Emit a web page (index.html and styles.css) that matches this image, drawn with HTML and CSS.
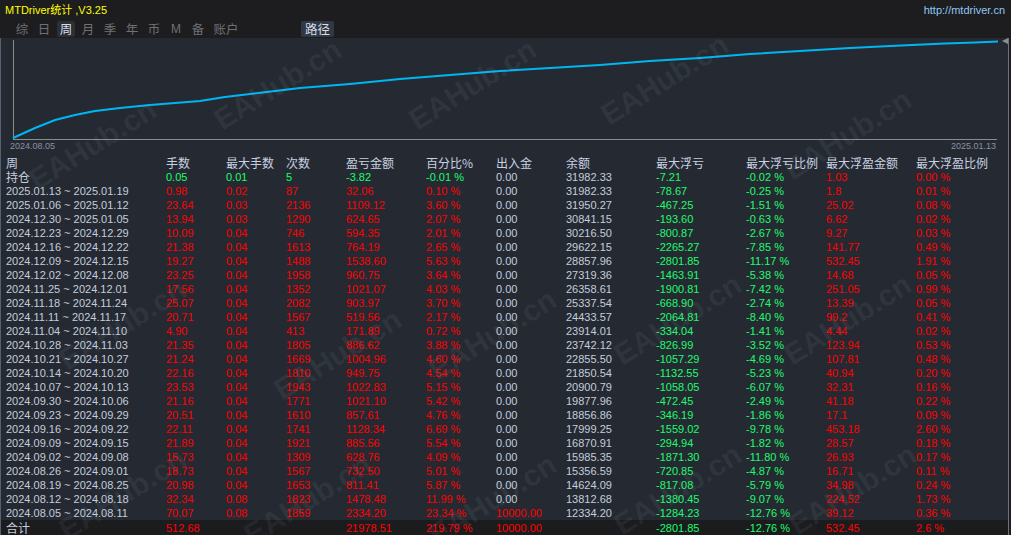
FILE: index.html
```html
<!DOCTYPE html>
<html lang="zh">
<head>
<meta charset="utf-8">
<title>MTDriver统计</title>
<link rel="stylesheet" href="styles.css">
</head>
<body>
<div class="app">
  <header class="titlebar">
    <span class="title">MTDriver统计 ,V3.25</span>
    <span class="url">http://mtdriver.cn</span>
  </header>
  <nav class="tabs">
    <span class="tab">综</span>
    <span class="tab">日</span>
    <span class="tab active">周</span>
    <span class="tab">月</span>
    <span class="tab">季</span>
    <span class="tab">年</span>
    <span class="tab">币</span>
    <span class="tab latin">M</span>
    <span class="tab">备</span>
    <span class="tab wide">账户</span>
    <span class="tab path">路径</span>
  </nav>
  <main class="panel">
    <div class="chart">
      <svg class="chart-svg" width="1008" height="118" viewBox="0 0 1008 118">
        <line x1="13.5" y1="2" x2="13.5" y2="101.5" class="axis"/>
        <line x1="13" y1="101.5" x2="997" y2="101.5" class="axis"/>
        <polyline class="curve" points="13,100 24,95 35,90 45,86 55,82 75,77 95,73 120,70 150,67 175,65 200,63 225,59 250,56 275,53 300,50 350,46 400,41 450,37 500,33 550,30 600,27 650,23 700,20 750,16 800,13 850,10 880,8.5 912,7 945,5.5 975,4.5 998,3.5"/>
        <polygon class="handle" points="1002,3 1008,0 1008,6"/>
        <text x="10" y="111" class="axis-label">2024.08.05</text>
        <text x="996" y="111" class="axis-label end">2025.01.13</text>
      </svg>
    </div>
    <div class="table">
      <div class="row head"><span>周</span><span>手数</span><span>最大手数</span><span>次数</span><span>盈亏金额</span><span>百分比%</span><span>出入金</span><span>余额</span><span>最大浮亏</span><span>最大浮亏比例</span><span>最大浮盈金额</span><span>最大浮盈比例</span></div>
      <div class="row"><span class="cjk">持仓</span><span class="g">0.05</span><span class="g">0.01</span><span class="g">5</span><span class="g">-3.82</span><span class="g">-0.01 %</span><span>0.00</span><span>31982.33</span><span class="g">-7.21</span><span class="g">-0.02 %</span><span class="r">1.03</span><span class="r">0.00 %</span></div>
      <div class="row"><span>2025.01.13 ~ 2025.01.19</span><span class="r">0.98</span><span class="r">0.02</span><span class="r">87</span><span class="r">32.06</span><span class="r">0.10 %</span><span>0.00</span><span>31982.33</span><span class="g">-78.67</span><span class="g">-0.25 %</span><span class="r">1.8</span><span class="r">0.01 %</span></div>
      <div class="row"><span>2025.01.06 ~ 2025.01.12</span><span class="r">23.64</span><span class="r">0.03</span><span class="r">2136</span><span class="r">1109.12</span><span class="r">3.60 %</span><span>0.00</span><span>31950.27</span><span class="g">-467.25</span><span class="g">-1.51 %</span><span class="r">25.02</span><span class="r">0.08 %</span></div>
      <div class="row"><span>2024.12.30 ~ 2025.01.05</span><span class="r">13.94</span><span class="r">0.03</span><span class="r">1290</span><span class="r">624.65</span><span class="r">2.07 %</span><span>0.00</span><span>30841.15</span><span class="g">-193.60</span><span class="g">-0.63 %</span><span class="r">6.62</span><span class="r">0.02 %</span></div>
      <div class="row"><span>2024.12.23 ~ 2024.12.29</span><span class="r">10.09</span><span class="r">0.04</span><span class="r">746</span><span class="r">594.35</span><span class="r">2.01 %</span><span>0.00</span><span>30216.50</span><span class="g">-800.87</span><span class="g">-2.67 %</span><span class="r">9.27</span><span class="r">0.03 %</span></div>
      <div class="row"><span>2024.12.16 ~ 2024.12.22</span><span class="r">21.38</span><span class="r">0.04</span><span class="r">1613</span><span class="r">764.19</span><span class="r">2.65 %</span><span>0.00</span><span>29622.15</span><span class="g">-2265.27</span><span class="g">-7.85 %</span><span class="r">141.77</span><span class="r">0.49 %</span></div>
      <div class="row"><span>2024.12.09 ~ 2024.12.15</span><span class="r">19.27</span><span class="r">0.04</span><span class="r">1488</span><span class="r">1538.60</span><span class="r">5.63 %</span><span>0.00</span><span>28857.96</span><span class="g">-2801.85</span><span class="g">-11.17 %</span><span class="r">532.45</span><span class="r">1.91 %</span></div>
      <div class="row"><span>2024.12.02 ~ 2024.12.08</span><span class="r">23.25</span><span class="r">0.04</span><span class="r">1958</span><span class="r">960.75</span><span class="r">3.64 %</span><span>0.00</span><span>27319.36</span><span class="g">-1463.91</span><span class="g">-5.38 %</span><span class="r">14.68</span><span class="r">0.05 %</span></div>
      <div class="row"><span>2024.11.25 ~ 2024.12.01</span><span class="r">17.56</span><span class="r">0.04</span><span class="r">1352</span><span class="r">1021.07</span><span class="r">4.03 %</span><span>0.00</span><span>26358.61</span><span class="g">-1900.81</span><span class="g">-7.42 %</span><span class="r">251.05</span><span class="r">0.99 %</span></div>
      <div class="row"><span>2024.11.18 ~ 2024.11.24</span><span class="r">25.07</span><span class="r">0.04</span><span class="r">2082</span><span class="r">903.97</span><span class="r">3.70 %</span><span>0.00</span><span>25337.54</span><span class="g">-668.90</span><span class="g">-2.74 %</span><span class="r">13.39</span><span class="r">0.05 %</span></div>
      <div class="row"><span>2024.11.11 ~ 2024.11.17</span><span class="r">20.71</span><span class="r">0.04</span><span class="r">1567</span><span class="r">519.56</span><span class="r">2.17 %</span><span>0.00</span><span>24433.57</span><span class="g">-2064.81</span><span class="g">-8.40 %</span><span class="r">99.2</span><span class="r">0.41 %</span></div>
      <div class="row"><span>2024.11.04 ~ 2024.11.10</span><span class="r">4.90</span><span class="r">0.04</span><span class="r">413</span><span class="r">171.89</span><span class="r">0.72 %</span><span>0.00</span><span>23914.01</span><span class="g">-334.04</span><span class="g">-1.41 %</span><span class="r">4.44</span><span class="r">0.02 %</span></div>
      <div class="row"><span>2024.10.28 ~ 2024.11.03</span><span class="r">21.35</span><span class="r">0.04</span><span class="r">1805</span><span class="r">886.62</span><span class="r">3.88 %</span><span>0.00</span><span>23742.12</span><span class="g">-826.99</span><span class="g">-3.52 %</span><span class="r">123.94</span><span class="r">0.53 %</span></div>
      <div class="row"><span>2024.10.21 ~ 2024.10.27</span><span class="r">21.24</span><span class="r">0.04</span><span class="r">1669</span><span class="r">1004.96</span><span class="r">4.60 %</span><span>0.00</span><span>22855.50</span><span class="g">-1057.29</span><span class="g">-4.69 %</span><span class="r">107.81</span><span class="r">0.48 %</span></div>
      <div class="row"><span>2024.10.14 ~ 2024.10.20</span><span class="r">22.16</span><span class="r">0.04</span><span class="r">1810</span><span class="r">949.75</span><span class="r">4.54 %</span><span>0.00</span><span>21850.54</span><span class="g">-1132.55</span><span class="g">-5.23 %</span><span class="r">40.94</span><span class="r">0.20 %</span></div>
      <div class="row"><span>2024.10.07 ~ 2024.10.13</span><span class="r">23.53</span><span class="r">0.04</span><span class="r">1943</span><span class="r">1022.83</span><span class="r">5.15 %</span><span>0.00</span><span>20900.79</span><span class="g">-1058.05</span><span class="g">-6.07 %</span><span class="r">32.31</span><span class="r">0.16 %</span></div>
      <div class="row"><span>2024.09.30 ~ 2024.10.06</span><span class="r">21.16</span><span class="r">0.04</span><span class="r">1771</span><span class="r">1021.10</span><span class="r">5.42 %</span><span>0.00</span><span>19877.96</span><span class="g">-472.45</span><span class="g">-2.49 %</span><span class="r">41.18</span><span class="r">0.22 %</span></div>
      <div class="row"><span>2024.09.23 ~ 2024.09.29</span><span class="r">20.51</span><span class="r">0.04</span><span class="r">1610</span><span class="r">857.61</span><span class="r">4.76 %</span><span>0.00</span><span>18856.86</span><span class="g">-346.19</span><span class="g">-1.86 %</span><span class="r">17.1</span><span class="r">0.09 %</span></div>
      <div class="row"><span>2024.09.16 ~ 2024.09.22</span><span class="r">22.11</span><span class="r">0.04</span><span class="r">1741</span><span class="r">1128.34</span><span class="r">6.69 %</span><span>0.00</span><span>17999.25</span><span class="g">-1559.02</span><span class="g">-9.78 %</span><span class="r">453.18</span><span class="r">2.60 %</span></div>
      <div class="row"><span>2024.09.09 ~ 2024.09.15</span><span class="r">21.89</span><span class="r">0.04</span><span class="r">1921</span><span class="r">885.56</span><span class="r">5.54 %</span><span>0.00</span><span>16870.91</span><span class="g">-294.94</span><span class="g">-1.82 %</span><span class="r">28.57</span><span class="r">0.18 %</span></div>
      <div class="row"><span>2024.09.02 ~ 2024.09.08</span><span class="r">15.73</span><span class="r">0.04</span><span class="r">1309</span><span class="r">628.76</span><span class="r">4.09 %</span><span>0.00</span><span>15985.35</span><span class="g">-1871.30</span><span class="g">-11.80 %</span><span class="r">26.93</span><span class="r">0.17 %</span></div>
      <div class="row"><span>2024.08.26 ~ 2024.09.01</span><span class="r">18.73</span><span class="r">0.04</span><span class="r">1567</span><span class="r">732.50</span><span class="r">5.01 %</span><span>0.00</span><span>15356.59</span><span class="g">-720.85</span><span class="g">-4.87 %</span><span class="r">16.71</span><span class="r">0.11 %</span></div>
      <div class="row"><span>2024.08.19 ~ 2024.08.25</span><span class="r">20.98</span><span class="r">0.04</span><span class="r">1653</span><span class="r">811.41</span><span class="r">5.87 %</span><span>0.00</span><span>14624.09</span><span class="g">-817.08</span><span class="g">-5.79 %</span><span class="r">34.98</span><span class="r">0.24 %</span></div>
      <div class="row"><span>2024.08.12 ~ 2024.08.18</span><span class="r">32.34</span><span class="r">0.08</span><span class="r">1823</span><span class="r">1478.48</span><span class="r">11.99 %</span><span>0.00</span><span>13812.68</span><span class="g">-1380.45</span><span class="g">-9.07 %</span><span class="r">224.52</span><span class="r">1.73 %</span></div>
      <div class="row"><span>2024.08.05 ~ 2024.08.11</span><span class="r">70.07</span><span class="r">0.08</span><span class="r">1859</span><span class="r">2334.20</span><span class="r">23.34 %</span><span class="r">10000.00</span><span>12334.20</span><span class="g">-1284.23</span><span class="g">-12.76 %</span><span class="r">39.12</span><span class="r">0.36 %</span></div>
      <div class="row total"><span class="cjk">合计</span><span class="r">512.68</span><span></span><span></span><span class="r">21978.51</span><span class="r">219.79 %</span><span class="r">10000.00</span><span></span><span class="g">-2801.85</span><span class="g">-12.76 %</span><span class="r">532.45</span><span class="r">2.6 %</span></div>
    </div>
    <div class="watermarks" aria-hidden="true">
      <span class="wm" style="left:40px;top:125px">EAHub.cn</span>
      <span class="wm" style="left:225px;top:65px">EAHub.cn</span>
      <span class="wm" style="left:420px;top:65px">EAHub.cn</span>
      <span class="wm" style="left:612px;top:60px">EAHub.cn</span>
      <span class="wm" style="left:795px;top:115px">EAHub.cn</span>
      <span class="wm" style="left:70px;top:305px">EAHub.cn</span>
      <span class="wm" style="left:285px;top:335px">EAHub.cn</span>
      <span class="wm" style="left:440px;top:315px">EAHub.cn</span>
      <span class="wm" style="left:625px;top:300px">EAHub.cn</span>
      <span class="wm" style="left:795px;top:300px">EAHub.cn</span>
      <span class="wm" style="left:70px;top:475px">EAHub.cn</span>
      <span class="wm" style="left:255px;top:480px">EAHub.cn</span>
      <span class="wm" style="left:440px;top:480px">EAHub.cn</span>
      <span class="wm" style="left:625px;top:470px">EAHub.cn</span>
      <span class="wm" style="left:800px;top:470px">EAHub.cn</span>
    </div>
  </main>
</div>
</body>
</html>
```

FILE: styles.css
```css
html, body {
  margin: 0;
  padding: 0;
  background: #1d1d1f;
}
body {
  width: 1011px;
  height: 535px;
  overflow: hidden;
  font-family: "Liberation Sans", "Noto Sans CJK SC", sans-serif;
  font-size: 11px;
  color: #c4cddd;
}
.app {
  display: flex;
  flex-direction: column;
  width: 1011px;
  height: 535px;
  position: relative;
}
.titlebar {
  height: 20px;
  display: flex;
  justify-content: space-between;
  align-items: center;
  padding: 0 6px 0 5px;
  line-height: 16px;
}
.title {
  color: #ffff00;
  font-size: 11px;
}
.url {
  color: #8cc8f4;
  font-size: 11px;
}
.tabs {
  height: 18px;
  display: flex;
  align-items: flex-start;
  gap: 4px;
  padding-left: 13px;
}
.tab {
  width: 18px;
  height: 16px;
  margin-top: 1px;
  line-height: 16px;
  text-align: center;
  font-family: "Noto Sans CJK SC", sans-serif;
  font-size: 12.5px;
  color: #6d7176;
  border-radius: 2px;
}
.tab.latin {
  font-family: "Liberation Sans", sans-serif;
  font-size: 12px;
}
.tab.wide {
  width: 30px;
}
.tab.active {
  background: #2b3037;
  color: #d6dde8;
}
.tab.path {
  width: 33px;
  margin-left: 56px;
  background: #303845;
  color: #d6dde8;
}
.panel {
  position: relative;
  flex: 1;
  width: 1007px;
  background: #252a32;
  border-left: 1px solid #56606e;
  border-right: 1px solid #6b7380;
  overflow: hidden;
}
.chart {
  height: 118px;
}
.chart-svg {
  display: block;
  margin-left: -1px;
}
.axis {
  stroke: #8c8c8c;
  stroke-width: 1;
}
.curve {
  fill: none;
  stroke: #00b6f2;
  stroke-width: 2;
}
.handle {
  fill: #8a8f96;
}
.axis-label {
  fill: #8892a2;
  font-family: "Liberation Sans", sans-serif;
  font-size: 9px;
}
.axis-label.end {
  text-anchor: end;
}
.table {
  display: flex;
  flex-direction: column;
}
.row {
  display: grid;
  grid-template-columns: 160px 60px 60px 60px 80px 70px 70px 90px 90px 80px 90px 1fr;
  height: 14px;
  line-height: 14px;
  padding-left: 5px;
  white-space: nowrap;
}
.row.head, .row .cjk {
  font-family: "Noto Sans CJK SC", sans-serif;
  font-size: 12px;
}
.row.head {
  color: #c8d1e2;
}
.row.total {
  background: #1b1c1e;
  height: 16px;
  line-height: 16px;
}
.g {
  color: #1dfb6c;
}
.r {
  color: #ff0000;
}
.watermarks {
  position: absolute;
  inset: 0;
  pointer-events: none;
}
.wm {
  position: absolute;
  font-family: "Liberation Sans", sans-serif;
  font-weight: bold;
  font-size: 30px;
  color: rgba(210, 218, 230, 0.07);
  transform: rotate(-32deg);
  transform-origin: left bottom;
  white-space: nowrap;
}
```
